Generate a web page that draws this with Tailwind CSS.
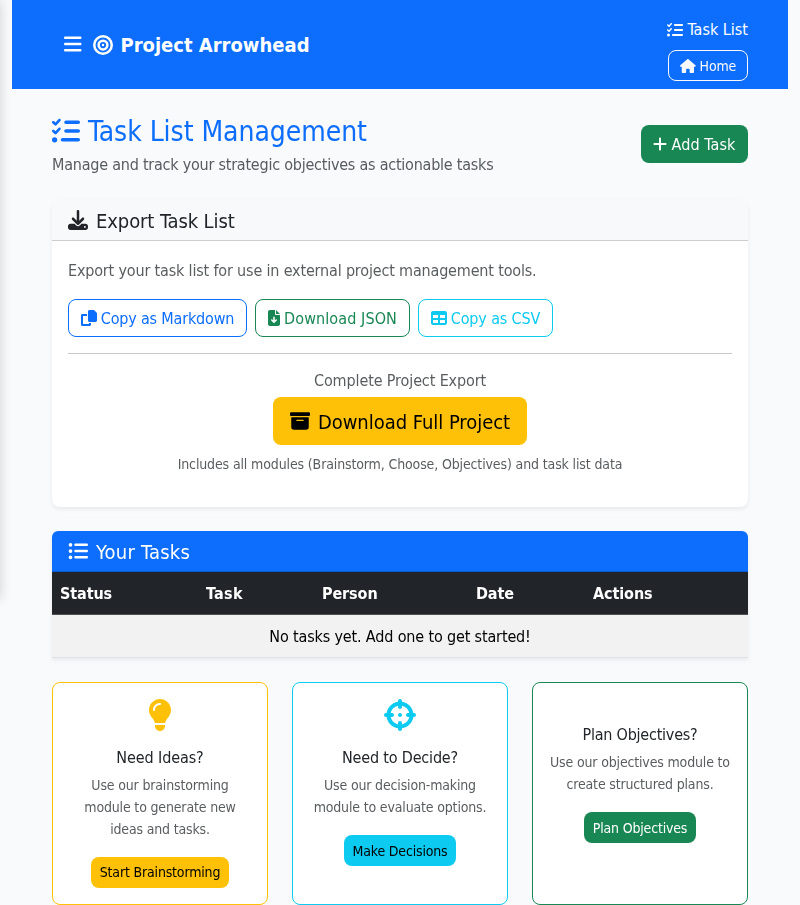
<!DOCTYPE html>
<html lang="en">
<head>
<meta charset="utf-8">
<title>Project Arrowhead</title>
<script src="https://cdn.jsdelivr.net/npm/@tailwindcss/browser@4"></script>
</head>
<body class="h-[905px] overflow-hidden bg-[#f8fafc] font-['DejaVu_Sans_Condensed','DejaVu_Sans',sans-serif] text-base text-[#212529]">
<svg class="hidden">
  <symbol id="tasks" viewBox="0 0 512 512"><path d="M152.100 38.200c9.900 8.900 10.700 24 1.800 33.900l-72 80c-4.400 4.900-10.600 7.800-17.200 7.900s-12.900-2.400-17.600-7L7 113C-2.300 103.600-2.300 88.400 7 79s24.600-9.400 33.900 0l22.100 22.100 55.100-61.200c8.900-9.900 24-10.700 33.900-1.800zm0 160c9.900 8.900 10.700 24 1.800 33.900l-72 80c-4.400 4.900-10.600 7.800-17.200 7.900s-12.900-2.400-17.600-7L7 273c-9.400-9.400-9.400-24.600 0-33.900s24.600-9.400 33.900 0l22.100 22.100 55.100-61.200c8.900-9.900 24-10.700 33.900-1.800zM224 96c0-17.700 14.300-32 32-32H480c17.700 0 32 14.300 32 32s-14.300 32-32 32H256c-17.700 0-32-14.300-32-32zm0 160c0-17.700 14.300-32 32-32H480c17.700 0 32 14.300 32 32s-14.300 32-32 32H256c-17.700 0-32-14.300-32-32zM160 416c0-17.700 14.300-32 32-32H480c17.700 0 32 14.300 32 32s-14.300 32-32 32H192c-17.700 0-32-14.300-32-32zM48 368a48 48 0 1 1 0 96 48 48 0 1 1 0-96z"/></symbol>
</svg>

<!-- Collapsed sidebar, only its shadow reaches the page -->
<aside class="fixed top-0 -left-[280px] h-[600px] w-[280px] bg-white shadow-[2px_0_10px_rgba(0,0,0,0.12)]"></aside>

<div class="relative mx-3">
  <header class="flex h-[89px] items-center justify-between bg-[#0d6efd] px-10 text-white">
    <div class="flex items-center pl-3">
      <svg class="mb-0.5 h-5 w-[17.5px]" viewBox="0 0 448 512" fill="currentColor"><path d="M0 96C0 78.300 14.300 64 32 64H416c17.700 0 32 14.300 32 32s-14.300 32-32 32H32C14.300 128 0 113.700 0 96zM0 256c0-17.700 14.300-32 32-32H416c17.700 0 32 14.300 32 32s-14.300 32-32 32H32c-17.700 0-32-14.300-32-32zM448 416c0 17.700-14.300 32-32 32H32c-17.700 0-32-14.300-32-32s14.300-32 32-32H416c17.700 0 32 14.300 32 32z"/></svg>
      <svg class="ml-[11px] h-5 w-5" viewBox="0 0 512 512" fill="currentColor"><path d="M448 256A192 192 0 1 0 64 256a192 192 0 1 0 384 0zM0 256a256 256 0 1 1 512 0A256 256 0 1 1 0 256zm256 80a80 80 0 1 0 0-160 80 80 0 1 0 0 160zm0-224a144 144 0 1 1 0 288 144 144 0 1 1 0-288zM224 256a32 32 0 1 1 64 0 32 32 0 1 1 -64 0z"/></svg>
      <span class="ml-2 text-xl font-bold">Project Arrowhead</span>
    </div>
    <nav class="flex flex-col items-end gap-2 pt-2.5">
      <a class="flex h-6 items-center gap-1"><svg class="h-4 w-4" fill="currentColor"><use href="#tasks"/></svg>Task List</a>
      <a class="flex h-[31px] w-20 items-center justify-center gap-1 rounded-lg border border-[#f8f9fa] text-sm tracking-[-0.15px] text-[#f8f9fa]"><svg class="h-3.5 w-[15.75px]" viewBox="0 0 576 512" fill="currentColor"><path d="M575.800 255.500c0 18-15 32.100-32 32.100h-32l.7 160.200c0 2.700-.2 5.400-.5 8.100V472c0 22.100-17.900 40-40 40H456c-1.100 0-2.200 0-3.300-.1c-1.400 .1-2.800 .1-4.200 .1H416 392c-22.100 0-40-17.900-40-40V448 384c0-17.700-14.300-32-32-32H256c-17.700 0-32 14.300-32 32v64 24c0 22.100-17.900 40-40 40H160 128.100c-1.500 0-3-.1-4.500-.2c-1.200 .1-2.400 .2-3.600 .2H104c-22.100 0-40-17.900-40-40V360c0-.9 0-1.900 .1-2.800V287.600H32c-18 0-32-14-32-32.100c0-9 3-17 10-24L266.400 8c7-7 15-8 22-8s15 2 21 7L564.800 231.500c8 7 12 15 11 24z"/></svg>Home</a>
    </nav>
  </header>

  <main class="px-10 pt-[23px]">
    <section class="flex h-16 items-center justify-between">
      <div class="pt-[3px]">
        <h1 class="flex h-[34px] items-center gap-2 text-[28px] tracking-[-0.05px] text-[#0d6efd]"><svg class="h-7 w-7" fill="currentColor"><use href="#tasks"/></svg><span class="pt-0.5">Task List Management</span></h1>
        <p class="mt-1 h-[26px] leading-[26px] tracking-[-0.23px] text-[#212529]/75">Manage and track your strategic objectives as actionable tasks</p>
      </div>
      <button class="flex h-[38px] w-[107px] items-center justify-center gap-1 rounded-lg bg-[#198754] tracking-[0.1px] text-white"><svg class="h-4 w-3.5" viewBox="0 0 448 512" fill="currentColor"><path d="M256 80c0-17.700-14.300-32-32-32s-32 14.300-32 32V224H48c-17.700 0-32 14.300-32 32s14.300 32 32 32H192V432c0 17.700 14.300 32 32 32s32-14.300 32-32V288H400c17.700 0 32-14.300 32-32s-14.300-32-32-32H256V80z"/></svg><span class="pt-0.5">Add Task</span></button>
    </section>

    <section class="mt-6 h-[307px] rounded-lg bg-white shadow-[0_2px_4px_rgba(0,0,0,0.075)]">
      <h2 class="flex h-[41px] items-center gap-2 rounded-t-lg border-b border-black/[0.175] bg-[#f8f9fb] px-4 text-xl tracking-[-0.1px]"><svg class="h-5 w-5" viewBox="0 0 512 512" fill="currentColor"><path d="M288 32c0-17.700-14.300-32-32-32s-32 14.300-32 32V274.700l-73.400-73.400c-12.500-12.500-32.800-12.500-45.300 0s-12.500 32.800 0 45.300l128 128c12.500 12.500 32.800 12.500 45.300 0l128-128c12.500-12.500 12.500-32.800 0-45.300s-32.800-12.500-45.300 0L288 274.700V32zM64 352c-35.300 0-64 28.700-64 64v32c0 35.300 28.700 64 64 64H448c35.300 0 64-28.700 64-64V416c0-35.300-28.700-64-64-64H346.500l-45.300 45.300c-25 25-65.500 25-90.500 0L165.500 352H64zm368 56a24 24 0 1 1 0 48 24 24 0 1 1 0-48z"/></svg><span class="pt-0.5">Export Task List</span></h2>
      <div class="px-4 pt-[17px]">
        <p class="h-[26px] leading-[26px] tracking-[-0.17px] text-[#212529]/75">Export your task list for use in external project management tools.</p>
        <div class="mt-[15px] flex gap-2">
          <button class="flex h-[38px] w-[179px] items-center justify-center gap-1 rounded-lg border border-[#0d6efd] tracking-[-0.18px] text-[#0d6efd]"><svg class="h-4 w-4" viewBox="0 0 512 512" fill="currentColor"><path d="M272 0H396.100c12.700 0 24.900 5.100 33.900 14.100l67.900 67.900c9 9 14.100 21.200 14.100 33.900V336c0 26.500-21.500 48-48 48H272c-26.500 0-48-21.500-48-48V48c0-26.500 21.500-48 48-48zM48 128H192v64H64V448H256V416h64v48c0 26.500-21.500 48-48 48H48c-26.500 0-48-21.500-48-48V176c0-26.500 21.500-48 48-48z"/></svg><span class="pt-0.5">Copy as Markdown</span></button>
          <button class="flex h-[38px] w-[155px] items-center justify-center gap-1 rounded-lg border border-[#198754] tracking-[0.1px] text-[#198754]"><svg class="h-4 w-3" viewBox="0 0 384 512" fill="currentColor"><path d="M64 0C28.700 0 0 28.700 0 64V448c0 35.300 28.700 64 64 64H320c35.300 0 64-28.700 64-64V160H256c-17.700 0-32-14.300-32-32V0H64zM256 0V128H384L256 0zM216 232V334.100l31-31c9.400-9.400 24.600-9.400 33.900 0s9.400 24.600 0 33.900l-72 72c-9.400 9.400-24.600 9.400-33.900 0l-72-72c-9.400-9.400-9.400-24.600 0-33.900s24.600-9.400 33.900 0l31 31V232c0-13.300 10.700-24 24-24s24 10.700 24 24z"/></svg><span class="pt-0.5">Download JSON</span></button>
          <button class="flex h-[38px] w-[135px] items-center justify-center gap-1 rounded-lg border border-[#0dcaf0] tracking-[-0.15px] text-[#0dcaf0]"><svg class="h-4 w-4" viewBox="0 0 512 512" fill="currentColor"><path d="M64 256V160H224v96H64zm0 64H224v96H64V320zm224 96V320H448v96H288zM448 256H288V160H448v96zM64 32C28.700 32 0 60.700 0 96V416c0 35.300 28.700 64 64 64H448c35.300 0 64-28.700 64-64V96c0-35.300-28.700-64-64-64H64z"/></svg><span class="pt-0.5">Copy as CSV</span></button>
        </div>
        <hr class="mt-4 border-[#c7c8c9]">
        <div class="flex flex-col items-center pt-[14px]">
          <p class="h-[26px] leading-[26px] tracking-[-0.12px] text-[#212529]/75">Complete Project Export</p>
          <button class="mt-[3px] flex h-12 w-[254px] items-center justify-center gap-2 rounded-lg bg-[#ffc107] text-xl tracking-[-0.04px] text-black"><svg class="h-5 w-5" viewBox="0 0 512 512" fill="currentColor"><path d="M32 32H480c17.700 0 32 14.300 32 32V96c0 17.700-14.300 32-32 32H32C14.300 128 0 113.700 0 96V64C0 46.300 14.300 32 32 32zm0 128H480V416c0 35.300-28.700 64-64 64H96c-35.300 0-64-28.700-64-64V160zm128 80c0 8.800 7.200 16 16 16H336c8.800 0 16-7.200 16-16s-7.200-16-16-16H176c-8.800 0-16 7.200-16 16z"/></svg><span class="pt-0.5">Download Full Project</span></button>
          <p class="mt-2 text-sm leading-[22px] tracking-[-0.13px] text-[#212529]/75">Includes all modules (Brainstorm, Choose, Objectives) and task list data</p>
        </div>
      </div>
    </section>

    <section class="mt-6 rounded-t-md bg-white shadow-[0_2px_4px_rgba(0,0,0,0.075)]">
      <h2 class="flex h-[41px] items-center gap-2 rounded-t-md border-b border-black/[0.175] bg-[#0d6efd] px-4 text-xl tracking-[0.23px] text-white"><svg class="h-5 w-5" viewBox="0 0 512 512" fill="currentColor"><path d="M64 144a48 48 0 1 0 0-96 48 48 0 1 0 0 96zM192 64c-17.700 0-32 14.300-32 32s14.300 32 32 32H480c17.700 0 32-14.300 32-32s-14.300-32-32-32H192zm0 160c-17.700 0-32 14.300-32 32s14.300 32 32 32H480c17.700 0 32-14.300 32-32s-14.300-32-32-32H192zm0 160c-17.700 0-32 14.300-32 32s14.300 32 32 32H480c17.700 0 32-14.300 32-32s-14.300-32-32-32H192zM64 464a48 48 0 1 0 0-96 48 48 0 1 0 0 96zm48-208a48 48 0 1 0 -96 0 48 48 0 1 0 96 0z"/></svg><span class="pt-0.5">Your Tasks</span></h2>
      <table class="w-full table-fixed border-collapse">
        <thead><tr class="h-[42px] border-b border-[#4d5154] bg-[#212529] text-left font-bold tracking-[-0.1px] text-white">
          <th class="w-[146px] px-2 pt-[3px]">Status</th><th class="w-[116px] px-2 pt-[3px] tracking-[0.3px]">Task</th><th class="w-[154px] px-2 pt-[3px]">Person</th><th class="w-[117px] px-2 pt-[3px]">Date</th><th class="px-2 pt-[3px]">Actions</th>
        </tr></thead>
        <tbody><tr class="h-[43px] border-b border-[#dee2e6] bg-[#f2f2f2] text-black"><td colspan="5" class="pt-0.5 text-center tracking-[-0.15px]">No tasks yet. Add one to get started!</td></tr></tbody>
      </table>
    </section>

    <section class="mt-6 grid h-[223px] grid-cols-3 gap-6 text-center">
      <article class="flex flex-col items-center rounded-lg border border-[#ffc107] bg-white pt-4">
        <svg class="h-8 w-6 text-[#ffc107]" viewBox="0 0 384 512" fill="currentColor"><path d="M272 384c9.600-31.900 29.500-59.100 49.200-86.200l0 0c5.200-7.100 10.400-14.200 15.400-21.400c19.800-28.500 31.400-63 31.400-100.300C368 78.800 289.200 0 192 0S16 78.800 16 176c0 37.300 11.600 71.900 31.400 100.300c5 7.200 10.200 14.300 15.400 21.400l0 0c19.800 27.100 39.700 54.400 49.200 86.200H272zM192 512c44.200 0 80-35.800 80-80V416H112v16c0 44.200 35.800 80 80 80zM112 176c0 8.800-7.200 16-16 16s-16-7.200-16-16c0-61.900 50.100-112 112-112c8.800 0 16 7.200 16 16s-7.200 16-16 16c-44.200 0-80 35.800-80 80z"/></svg>
        <h3 class="mt-[17px] leading-5 tracking-[-0.1px]">Need Ideas?</h3>
        <p class="mt-1.5 text-sm leading-[22.4px] tracking-[-0.16px] text-[#212529]/75">Use our brainstorming<br>module to generate new<br>ideas and tasks.</p>
        <button class="mt-auto mb-4 h-[31px] w-[138px] rounded-lg bg-[#ffc107] text-sm tracking-[-0.17px] whitespace-nowrap text-black">Start Brainstorming</button>
      </article>
      <article class="flex flex-col items-center rounded-lg border border-[#0dcaf0] bg-white pt-4">
        <svg class="h-8 w-8 text-[#0dcaf0]" viewBox="0 0 512 512" fill="currentColor"><path d="M256 0c17.700 0 32 14.300 32 32V42.400c93.700 13.900 167.700 88 181.600 181.600H480c17.700 0 32 14.300 32 32s-14.300 32-32 32H469.600c-13.900 93.700-88 167.700-181.600 181.600V480c0 17.700-14.300 32-32 32s-32-14.300-32-32V469.600C130.300 455.700 56.300 381.700 42.400 288H32c-17.700 0-32-14.300-32-32s14.300-32 32-32H42.400C56.300 130.300 130.300 56.300 224 42.400V32c0-17.700 14.300-32 32-32zM107.400 288c12.500 58.300 58.400 104.100 116.600 116.600V384c0-17.700 14.300-32 32-32s32 14.300 32 32v20.600c58.300-12.500 104.100-58.400 116.600-116.600H384c-17.700 0-32-14.300-32-32s14.300-32 32-32h20.600C392.100 165.700 346.300 119.900 288 107.400V128c0 17.700-14.300 32-32 32s-32-14.300-32-32V107.400C165.700 119.900 119.900 165.700 107.400 224H128c17.700 0 32 14.300 32 32s-14.300 32-32 32H107.400zM256 224a32 32 0 1 1 0 64 32 32 0 1 1 0-64z"/></svg>
        <h3 class="mt-[17px] leading-5 tracking-[-0.18px]">Need to Decide?</h3>
        <p class="mt-1.5 text-sm leading-[22.4px] tracking-[-0.16px] text-[#212529]/75">Use our decision-making<br>module to evaluate options.</p>
        <button class="mt-[17px] h-[31px] w-28 rounded-lg bg-[#0dcaf0] text-sm tracking-[-0.17px] whitespace-nowrap text-black">Make Decisions</button>
      </article>
      <article class="flex flex-col items-center rounded-lg border border-[#198754] bg-white pt-[42px]">
        <h3 class="leading-5 tracking-[-0.23px]">Plan Objectives?</h3>
        <p class="mt-1.5 text-sm leading-[22.4px] tracking-[-0.16px] text-[#212529]/75">Use our objectives module to<br>create structured plans.</p>
        <button class="mt-[17px] h-[31px] w-28 rounded-lg bg-[#198754] text-sm tracking-[-0.17px] whitespace-nowrap text-white">Plan Objectives</button>
      </article>
    </section>
  </main>
</div>
</body>
</html>
